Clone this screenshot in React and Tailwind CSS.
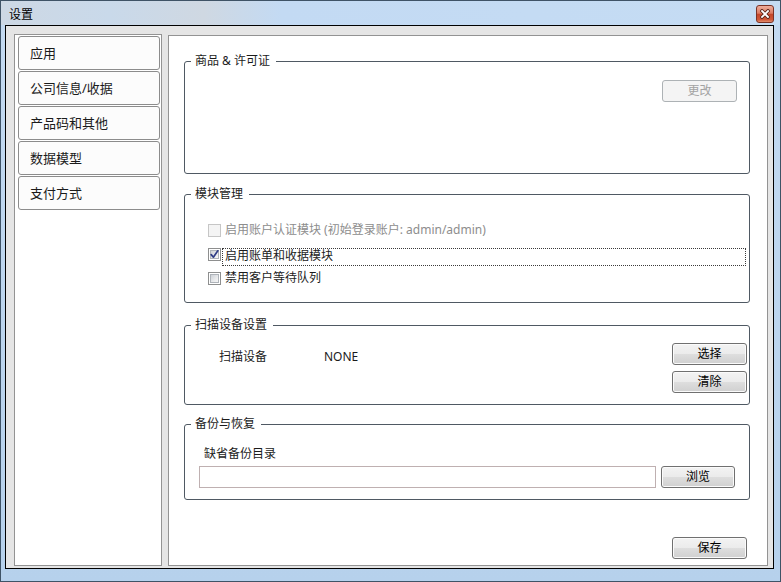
function WinButton({ children, className = "" }) {
  return (
    <div
      className={`flex items-center justify-center rounded-[3px] border border-[#707070] bg-[linear-gradient(to_bottom,#f3f3f3_0%,#ebebeb_50%,#dedede_50%,#d0d0d0_100%)] shadow-[inset_0_0_0_1px_#fbfbfb] text-[12px] leading-[16px] text-black ${className}`}
    >
      {children}
    </div>
  );
}

function Legend({ children }) {
  return (
    <span className="-mt-[9px] ml-[6px] w-fit bg-white pl-[4px] pr-[6px] text-[12px] leading-[16px] text-[#1b1b1b]">
      {children}
    </span>
  );
}

function Check({ state }) {
  if (state === "disabled") {
    return <span className="w-[13px] h-[13px] shrink-0 border border-[#c6c6c6] bg-[#f4f4f4]" />;
  }
  return (
    <span className="w-[13px] h-[13px] shrink-0 border border-[#8e8f8f] bg-white p-[1px] flex">
      <span className="flex-1 border border-[#aeb3b9] bg-[linear-gradient(135deg,#cdd1d7_0%,#e9eaec_60%,#f6f6f6_100%)] flex items-center justify-center overflow-visible">
        {state === "checked" && (
          <svg width="9" height="9" viewBox="0 0 9 9" className="-m-[1px] shrink-0 overflow-visible">
            <path d="M1.2 4.6 L3.4 7.2 L7.8 0.8" fill="none" stroke="#2f3d86" strokeWidth="1.7" strokeLinecap="round" strokeLinejoin="round" />
          </svg>
        )}
      </span>
    </span>
  );
}

const navItems = ["应用", "公司信息/收据", "产品码和其他", "数据模型", "支付方式"];

export default function App() {
  return (
    <div className="w-[781px] h-[582px] flex flex-col overflow-hidden border border-[#3f5366] bg-[linear-gradient(to_bottom,#c4daf1_0%,#b6d1ec_100%)] font-['Noto_Sans','Noto_Sans_CJK_SC',sans-serif] text-[12px] text-[#1b1b1b]">
      {/* Title bar */}
      <div className="h-[24px] shrink-0 flex items-start justify-between bg-[linear-gradient(to_right,#cdd8e4_0%,#c9d9ea_14%,#cfd8e2_26%,#c3daf3_36%,#c5dcf3_100%)]">
        <span className="pl-[8px] pt-[6px] text-[12px] leading-[16px] text-black">设置</span>
        <div className="mt-[4px] mr-[6px] w-[18px] h-[18px] rounded-[3px] border border-[#7b3326] bg-[linear-gradient(to_bottom,#eeae9c_0%,#dc7b62_45%,#c4462a_52%,#cf5737_85%,#e28d6d_100%)] flex items-center justify-center">
          <svg width="10" height="10" viewBox="0 0 10 10">
            <path d="M2 2 L8 8 M8 2 L2 8" stroke="#5a2418" strokeWidth="3.6" strokeLinecap="square" />
            <path d="M2 2 L8 8 M8 2 L2 8" stroke="#ffffff" strokeWidth="1.8" strokeLinecap="square" />
          </svg>
        </div>
      </div>

      {/* Client area */}
      <div className="flex-1 min-h-0 ml-[4px] mr-[6px] mb-[12px] border border-black bg-[#e5e5e5] flex pt-[8px] pl-[8px] pr-[5px] pb-[2px] gap-[6px]">
        {/* Left nav panel */}
        <div className="w-[148px] shrink-0 border border-[#939393] bg-white pt-[1px] pl-[3px] flex flex-col gap-[1px]">
          {navItems.map((t) => (
            <div
              key={t}
              className="w-[142px] h-[34px] rounded-[3px] border border-[#8c8c8c] bg-[#fcfcfc] flex items-center pl-[11px] text-[13px] leading-[16px] text-[#1b1b1b]"
            >
              {t}
            </div>
          ))}
        </div>

        {/* Right panel */}
        <div className="w-[600px] shrink-0 mt-[1px] border border-[#939393] bg-white pl-[15px] flex flex-col">
          {/* 商品 & 许可证 */}
          <div className="mt-[25px] w-[566px] h-[113px] rounded-[3px] border border-[#4f5963] flex flex-col">
            <Legend>商品 &amp; 许可证</Legend>
            <div className="self-end mt-[11px] mr-[12px] w-[75px] h-[22px] rounded-[3px] border border-[#adb2b5] bg-[#f4f4f4] flex items-center justify-center text-[12px] leading-[16px] text-[#a3a3a3]">
              更改
            </div>
          </div>

          {/* 模块管理 */}
          <div className="mt-[20px] w-[566px] h-[109px] rounded-[3px] border border-[#4f5963] flex flex-col">
            <Legend>模块管理</Legend>
            <div className="mt-[16px] flex flex-col">
              <div className="h-[24px] flex items-center pl-[23px]">
                <Check state="disabled" />
                <span className="ml-[1px] pl-[3px] leading-[16px] text-[#8d8d8d]">
                  启用账户认证模块 (初始登录账户: admin/admin)
                </span>
              </div>
              <div className="h-[24px] flex items-center pl-[23px]">
                <Check state="checked" />
                <span className="ml-[1px] mr-[3px] self-end h-[18px] flex-1 border border-dotted border-[#3a3a3a] pl-[2px] pb-[2px] flex items-center leading-[14px] text-[#1b1b1b]">
                  启用账单和收据模块
                </span>
              </div>
              <div className="h-[24px] flex items-center pl-[23px]">
                <Check state="off" />
                <span className="ml-[1px] pl-[3px] leading-[16px] text-[#1b1b1b]">禁用客户等待队列</span>
              </div>
            </div>
          </div>

          {/* 扫描设备设置 */}
          <div className="mt-[22px] w-[566px] h-[80px] rounded-[3px] border border-[#4f5963] flex flex-col">
            <Legend>扫描设备设置</Legend>
            <div className="mt-[10px] flex items-start">
              <div className="ml-[34px] mt-[6px] flex leading-[16px]">
                <span className="w-[105px]">扫描设备</span>
                <span>NONE</span>
              </div>
              <div className="ml-auto mr-[2px] flex flex-col gap-[6px]">
                <WinButton className="w-[75px] h-[22px]">选择</WinButton>
                <WinButton className="w-[75px] h-[22px]">清除</WinButton>
              </div>
            </div>
          </div>

          {/* 备份与恢复 */}
          <div className="mt-[19px] w-[566px] h-[76px] rounded-[3px] border border-[#4f5963] flex flex-col">
            <Legend>备份与恢复</Legend>
            <span className="mt-[14px] ml-[19px] leading-[16px]">缺省备份目录</span>
            <div className="mt-[4px] flex items-center">
              <div className="ml-[14px] w-[457px] h-[22px] border border-[#bfb0b1] bg-white" />
              <WinButton className="ml-[5px] w-[74px] h-[22px]">浏览</WinButton>
            </div>
          </div>

          {/* Save */}
          <div className="mt-[37px] w-[566px] flex justify-end pr-[3px]">
            <WinButton className="w-[75px] h-[22px]">保存</WinButton>
          </div>
        </div>
      </div>
    </div>
  );
}
